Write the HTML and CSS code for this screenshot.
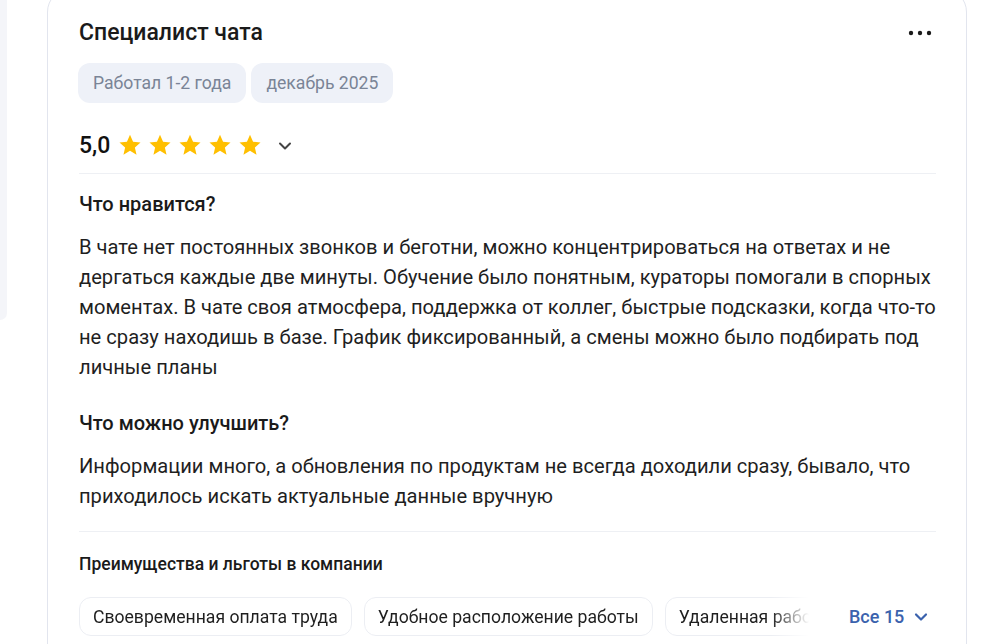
FILE: index.html
```html
<!DOCTYPE html>
<html lang="ru">
<head>
<meta charset="utf-8">
<title>Отзыв</title>
<link rel="stylesheet" href="styles.css">
</head>
<body>
<div class="page">
  <aside class="side"></aside>
  <article class="card">
    <header class="head">
      <h2 class="title">Специалист чата</h2>
      <button class="more" aria-label="Ещё">
        <svg width="24" height="8" viewBox="0 0 24 8"><circle cx="3" cy="4" r="2.2" fill="#1a1a1a"/><circle cx="12" cy="4" r="2.2" fill="#1a1a1a"/><circle cx="21" cy="4" r="2.2" fill="#1a1a1a"/></svg>
      </button>
    </header>
    <div class="tags">
      <span class="tag">Работал 1-2 года</span>
      <span class="tag">декабрь 2025</span>
    </div>
    <div class="rating">
      <span class="score">5,0</span>
      <span class="stars">
        <svg class="star" viewBox="0 0 24 24"><path d="M12 1.8l3.05 6.9 7.45.72-5.62 4.96 1.65 7.32L12 17.87 5.47 21.7l1.65-7.32L1.5 9.42l7.45-.72z"/></svg>
        <svg class="star" viewBox="0 0 24 24"><path d="M12 1.8l3.05 6.9 7.45.72-5.62 4.96 1.65 7.32L12 17.870 5.47 21.7l1.65-7.32L1.5 9.42l7.45-.72z"/></svg>
        <svg class="star" viewBox="0 0 24 24"><path d="M12 1.8l3.05 6.9 7.45.72-5.62 4.96 1.65 7.32L12 17.87 5.47 21.7l1.65-7.32L1.5 9.42l7.45-.72z"/></svg>
        <svg class="star" viewBox="0 0 24 24"><path d="M12 1.8l3.05 6.9 7.45.72-5.62 4.96 1.65 7.32L12 17.87 5.47 21.7l1.65-7.32L1.5 9.42l7.45-.72z"/></svg>
        <svg class="star" viewBox="0 0 24 24"><path d="M12 1.8l3.05 6.9 7.45.72-5.62 4.96 1.65 7.32L12 17.87 5.47 21.7l1.65-7.32L1.5 9.42l7.45-.72z"/></svg>
      </span>
      <svg class="chev" width="14" height="10" viewBox="0 0 14 10"><path d="M2 2.5l5 5 5-5" fill="none" stroke="#444" stroke-width="2" stroke-linecap="round" stroke-linejoin="round"/></svg>
    </div>
    <hr class="divider">
    <h3 class="q">Что нравится?</h3>
    <p class="text">В чате нет постоянных звонков и беготни, можно концентрироваться на ответах и не дергаться каждые две минуты. Обучение было понятным, кураторы помогали в спорных моментах. В чате своя атмосфера, поддержка от коллег, быстрые подсказки, когда что-то не сразу находишь в базе. График фиксированный, а смены можно было подбирать под личные планы</p>
    <h3 class="q q2">Что можно улучшить?</h3>
    <p class="text">Информации много, а обновления по продуктам не всегда доходили сразу, бывало, что приходилось искать актуальные данные вручную</p>
    <hr class="divider d2">
    <h4 class="perks-title">Преимущества и льготы в компании</h4>
    <div class="perks">
      <div class="chips">
        <span class="chip">Своевременная оплата труда</span>
        <span class="chip">Удобное расположение работы</span>
        <span class="chip">Удаленная работа</span>
      </div>
      <button class="all">Все 15
        <svg width="14" height="10" viewBox="0 0 14 10"><path d="M2 2.5l5 5 5-5" fill="none" stroke="#3b62ad" stroke-width="2.2" stroke-linecap="round" stroke-linejoin="round"/></svg>
      </button>
    </div>
  </article>
</div>
</body>
</html>
```

FILE: styles.css
```css
* { box-sizing: border-box; }
html, body {
  margin: 0;
  padding: 0;
  background: #ffffff;
  overflow: hidden;
}
body {
  font-family: Roboto, "Noto Sans", Arial, sans-serif;
  color: #1f1f1f;
  width: 988px;
  height: 644px;
}
.page {
  display: flex;
  align-items: flex-start;
}
.side {
  width: 7px;
  height: 320px;
  background: #f4f5f9;
  border-bottom-right-radius: 18px;
  flex: none;
}
.card {
  margin-left: 40px;
  margin-top: -12px;
  width: 920px;
  min-height: 700px;
  border: 1px solid #e2e5ee;
  border-radius: 24px;
  padding: 32px 30px 0 31px;
  background: #fff;
}
.head {
  display: flex;
  align-items: center;
  justify-content: space-between;
  height: 24px;
}
.title {
  margin: 0;
  font-size: 23px;
  font-weight: 500;
  line-height: 24px;
  color: #1a1a1a;
}
.more {
  border: 0;
  background: none;
  padding: 0;
  margin-right: 4px;
  display: flex;
}
.tags {
  display: flex;
  gap: 5px;
  margin-top: 18px;
  margin-left: -1px;
}
.tag {
  height: 40px;
  display: inline-flex;
  align-items: center;
  padding: 0 15px;
  background: #eef1f8;
  border-radius: 12px;
  color: #7a8496;
  font-size: 17.6px;
}
.rating {
  display: flex;
  align-items: center;
  height: 28px;
  margin-top: 28px;
}
.score {
  font-size: 23px;
  font-weight: 500;
  color: #111;
  margin-right: 8px;
}
.stars {
  display: flex;
  gap: 6px;
}
.star {
  width: 24px;
  height: 24px;
  fill: #ffbf00;
}
.chev {
  margin-left: 16px;
  margin-top: 2px;
}
.divider {
  border: 0;
  border-top: 1px solid #eef0f4;
  margin: 14px 0 0;
}
.q {
  margin: 18px 0 0;
  font-size: 20px;
  font-weight: 500;
  line-height: 24px;
  color: #1a1a1a;
}
.q2 { margin-top: 29px; }
.text {
  margin: 16px 0 0;
  font-size: 20.15px;
  line-height: 30px;
  color: #1f1f1f;
}
.d2 { margin-top: 20px; }
.perks-title {
  margin: 22px 0 0;
  font-size: 17.5px;
  font-weight: 500;
  line-height: 20px;
  color: #1a1a1a;
}
.perks {
  display: flex;
  align-items: center;
  margin-top: 23px;
}
.chips {
  display: flex;
  gap: 12px;
  width: 732px;
  overflow: hidden;
  flex: none;
  -webkit-mask-image: linear-gradient(to right, #000 692px, transparent 730px);
  mask-image: linear-gradient(to right, #000 692px, transparent 730px);
}
.chip {
  flex: none;
  height: 39px;
  display: inline-flex;
  align-items: center;
  padding: 0 13px;
  border: 1px solid #eceef3;
  border-radius: 12px;
  font-size: 17.6px;
  color: #1f1f1f;
  white-space: nowrap;
}
.all {
  margin-left: 38px;
  border: 0;
  background: none;
  padding: 0;
  display: inline-flex;
  align-items: center;
  gap: 10px;
  font-family: inherit;
  font-size: 18px;
  font-weight: 500;
  color: #3b62ad;
}
```
